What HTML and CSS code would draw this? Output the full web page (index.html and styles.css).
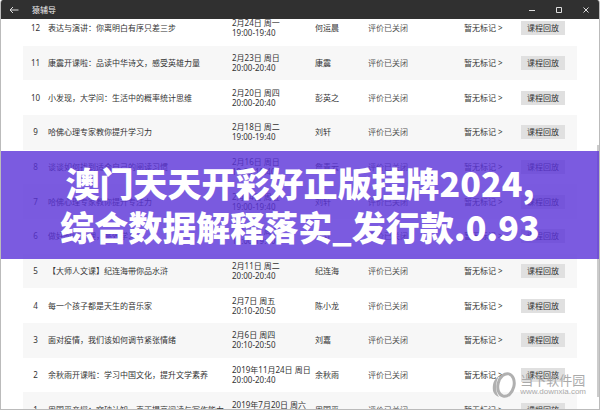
FILE: index.html
```
<!DOCTYPE html>
<html lang="zh-CN">
<head>
<meta charset="utf-8">
<meta name="viewport" content="width=device-width,initial-scale=1.0">
    <title>猿辅导</title>
    <link rel="stylesheet" href="styles.css">
</head>
<body>
<div class="window">
    <header class="titlebar">
        <button class="tb_btn" aria-label="返回"><svg viewBox="0 0 10 8"><path d="M9.5 4H1M4 1L1 4l3 3"/></svg></button>
        <span class="tb_name">猿辅导</span>
        <button class="tb_btn tb_ctrl" aria-label="最小化"><svg viewBox="0 0 8 8"><path d="M1 4.5h6"/></svg></button>
        <button class="tb_btn tb_ctrl" aria-label="最大化"><svg viewBox="0 0 8 8"><path d="M1.5 1.5h5v5h-5z"/></svg></button>
        <button class="tb_btn tb_ctrl" aria-label="关闭"><svg viewBox="0 0 8 8"><path d="M1.5 1.5l5 5M6.5 1.5l-5 5"/></svg></button>
    </header>

    <main class="list">
        <table class="lessons">
            <colgroup>
                <col class="c_no"><col><col class="c_date"><col class="c_name"><col class="c_rate"><col class="c_mark"><col class="c_play">
            </colgroup>
            <tbody>
                <tr><td>12</td><td>表达与演讲：你离明白有序只差三步</td><td>2月24日 周一<br>19:00-19:40</td><td>何运晨</td><td>评价已关闭</td><td><a href="#">暂无标记 &gt;</a></td><td><button class="play">课程回放</button></td></tr>
                <tr><td>11</td><td>康震开课啦：品读中华诗文，感受英雄力量</td><td>2月23日 周日<br>20:00-20:40</td><td>康震</td><td>评价已关闭</td><td><a href="#">暂无标记 &gt;</a></td><td><button class="play">课程回放</button></td></tr>
                <tr><td>10</td><td>小发现，大学问：生活中的概率统计思维</td><td>2月20日 周四<br>20:00-20:40</td><td>彭英之</td><td>评价已关闭</td><td><a href="#">暂无标记 &gt;</a></td><td><button class="play">课程回放</button></td></tr>
                <tr><td>9</td><td>哈佛心理专家教你提升学习力</td><td>2月18日 周二<br>19:00-19:40</td><td>刘轩</td><td>评价已关闭</td><td><a href="#">暂无标记 &gt;</a></td><td><button class="play">课程回放</button></td></tr>
                <tr><td>8</td><td>谈谈如何找到适合自己的阅读习惯</td><td>2月16日 周日<br>19:00-19:40</td><td>詹青云</td><td>评价已关闭</td><td><a href="#">暂无标记 &gt;</a></td><td><button class="play">课程回放</button></td></tr>
                <tr><td>7</td><td>哈佛心理专家教你提升专注力</td><td>2月14日 周五<br>19:00-19:40</td><td>刘轩</td><td>评价已关闭</td><td><a href="#">暂无标记 &gt;</a></td><td><button class="play">课程回放</button></td></tr>
                <tr><td>6</td><td>做好时间管理，高效学习</td><td>2月12日 周三<br>19:00-19:40</td><td>刘轩</td><td>评价已关闭</td><td><a href="#">暂无标记 &gt;</a></td><td><button class="play">课程回放</button></td></tr>
                <tr><td>5</td><td>【大师人文课】纪连海带你品水浒</td><td>2月11日 周二<br>20:00-20:40</td><td>纪连海</td><td>评价已关闭</td><td><a href="#">暂无标记 &gt;</a></td><td><button class="play">课程回放</button></td></tr>
                <tr><td>4</td><td>每一个孩子都是天生的音乐家</td><td>2月7日 周五<br>20:10-20:50</td><td>陈小龙</td><td>评价已关闭</td><td><a href="#">暂无标记 &gt;</a></td><td><button class="play">课程回放</button></td></tr>
                <tr><td>3</td><td>面对疫情，我们该如何调节紧张情绪</td><td>2月6日 周四<br>20:10-20:50</td><td>刘嘉</td><td>评价已关闭</td><td><a href="#">暂无标记 &gt;</a></td><td><button class="play">课程回放</button></td></tr>
                <tr><td>2</td><td>余秋雨开课啦：学习中国文化，提升文学素养</td><td>2019年11月24日 周日<br>20:00-20:40</td><td>余秋雨</td><td>评价已关闭</td><td><a href="#">暂无标记 &gt;</a></td><td><button class="play">课程回放</button></td></tr>
                <tr><td>1</td><td>周国平亲授：突破认知，真正提高阅读与写作能力</td><td>2019年7月20日 周六<br>19:00-20:00</td><td>周国平</td><td>评价已关闭</td><td><a href="#">暂无标记 &gt;</a></td><td><button class="play">课程回放</button></td></tr>
            </tbody>
        </table>
    </main>

    <div class="scroll_thumb"></div>

    <div class="banner">
        <h1>澳门天天开彩好正版挂牌2024,<br>综合数据解释落实_发行款.0.93</h1>
    </div>

    <div class="mark">
        <svg class="mark_logo" viewBox="0 0 24 26">
            <ellipse cx="14" cy="13" rx="8" ry="11.500" transform="rotate(14 14 13)"/>
            <path d="M7 4C2 7 0 12 1 19c1 3 3 5 6 6C3 19 3 11 7 4z"/>
        </svg>
        <div>
            <div class="mark_name">当下软件园</div>
            <div class="mark_url">www.downxia.com</div>
        </div>
    </div>
</div><!-- window -->
</body>
</html>
```
FILE: styles.css
```
*{margin:0;padding:0;box-sizing:border-box;}

body{
    background:#fff;
    font-family:"Noto Sans","Noto Sans CJK SC",sans-serif;
    font-size:8px;line-height:10px;color:#333;}

button{border:0;font:inherit;color:inherit;}
a{color:inherit;text-decoration:none;}

.window{
    display:flex;flex-direction:column;
    position:relative;overflow:hidden;
    height:100vh;
    border:1px solid #bbb;border-top:0;
    border-radius:3px 3px 0 0;}

/* title bar */
.titlebar{
    flex:none;
    display:flex;align-items:center;
    position:relative;z-index:1;
    height:19px;
    margin:0 -1px;padding:0 4px 0 8px;
    background:#303030;color:#eee;}

.tb_name{flex:1;margin-left:12px;}
.tb_btn{
    display:flex;justify-content:center;align-items:center;
    width:12px;height:19px;
    background:none;}
.tb_ctrl{width:20px;margin-left:7px;}
.tb_btn svg{
    width:10px;height:8px;
    fill:none;stroke:#ddd;stroke-width:1;}

/* lesson list, scrolled a little under the title bar */
.list{
    flex:1;min-height:0;
    margin-top:-8px;padding:0 22px;}

.lessons{
    width:100%;height:416px;
    table-layout:fixed;border-collapse:collapse;}
.lessons tr:nth-child(2n){background:#f7f7f7;}
.lessons td{vertical-align:middle;white-space:nowrap;}
.lessons td:first-child{text-align:center;}
.lessons td:nth-child(5){color:#555;}

.c_no{width:25px;}
.c_date{width:83px;}
.c_name{width:53px;}
.c_rate{width:96px;}
.c_mark{width:57px;}
.c_play{width:56px;}

.play{
    display:block;
    width:44px;height:14px;
    background:#e0e0e0;
    line-height:14px;}

.scroll_thumb{
    position:absolute;right:0;top:145px;bottom:12px;
    width:2px;
    background:#ccc;}

/* headline */
.banner{
    display:flex;justify-content:center;align-items:center;
    position:absolute;z-index:2;
    left:-1px;right:-1px;top:151px;
    height:108px;
    background:rgba(90,50,216,.8);}
.banner h1{
    font-family:"Noto Sans CJK SC",sans-serif;
    font-size:34px;line-height:44px;font-weight:900;
    color:#fff;text-align:center;white-space:nowrap;}

/* watermark */
.mark{
    display:flex;align-items:center;
    position:absolute;right:13px;bottom:11px;
    gap:4px;
    color:#aaa;}
.mark_logo{width:24px;height:26px;fill:#b0b0b0;}
.mark_logo ellipse{fill:none;stroke:#b0b0b0;stroke-width:3;}
.mark_name{font-size:13px;line-height:14px;}
.mark_url{font-family:"Liberation Sans",sans-serif;}
```
